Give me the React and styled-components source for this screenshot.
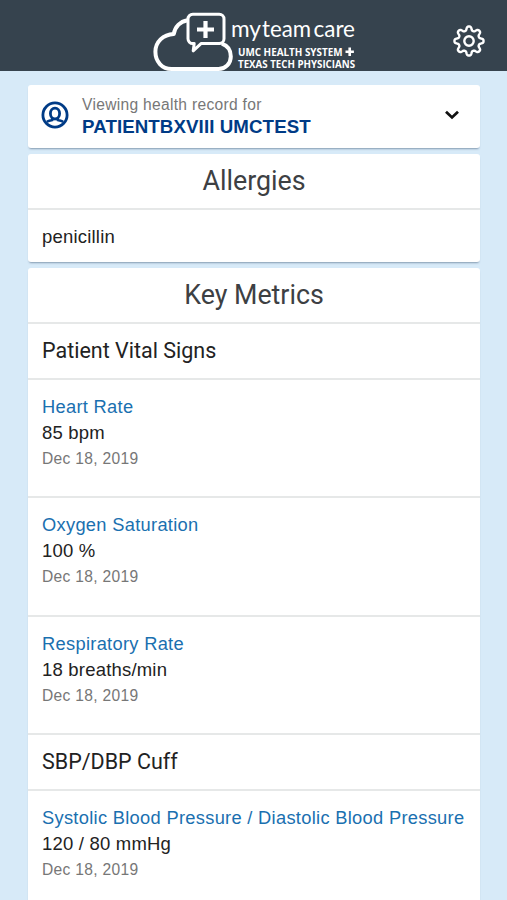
import { useState } from 'react';
import styled, { createGlobalStyle } from 'styled-components';

const vitals = [
  { name: 'Heart Rate', value: '85 bpm', date: 'Dec 18, 2019' },
  { name: 'Oxygen Saturation', value: '100 %', date: 'Dec 18, 2019' },
  { name: 'Respiratory Rate', value: '18 breaths/min', date: 'Dec 18, 2019' }
];

const cuff = [
  {
    name: 'Systolic Blood Pressure / Diastolic Blood Pressure',
    value: '120 / 80 mmHg',
    date: 'Dec 18, 2019'
  }
];

// eight rounded teeth around the origin
const gearPath = () => {
  const points = [];
  for (let i = 0; i < 160; i++) {
    const a = (i / 160) * Math.PI * 2;
    const r = 12.6 + 2.1 * Math.tanh(1.6 * Math.cos(8 * a));
    points.push(`${(r * Math.cos(a)).toFixed(2)} ${(r * Math.sin(a)).toFixed(2)}`);
  }
  return `M${points.join('L')}Z`;
};

const Logo = () => (
  <LogoSvg viewBox='150 10 207 62' role='img' aria-label='my team care'>
    <g fill='none' stroke='#fff' strokeLinejoin='round'>
      <path
        strokeWidth='4'
        d='M187.5 20.2C180 21.5 175 27 173.8 34C163 34.5 155.4 42 155.4 51.8C155.4 61.5 162 69 171.5 69H218.5C225.5 69 230.8 63.5 230.8 56.5C230.8 50.5 227.5 45.5 221.8 43.6'
      />
      <path
        strokeWidth='3'
        d='M192.8 14.2H219.2A4.8 4.8 0 0 1 224 19V38.8A4.8 4.8 0 0 1 219.2 43.6H201L193.2 50.8L194.2 43.6H192.8A4.8 4.8 0 0 1 188 38.8V19A4.8 4.8 0 0 1 192.8 14.2Z'
      />
      <path strokeWidth='4.2' d='M205.5 21V38M197 29.5H214' />
      <path strokeWidth='2.6' d='M349.7 47.6V56M345.5 51.8H353.9' />
    </g>
    <Wordmark x='231' y='37.3' textLength='30'>my</Wordmark>
    <Wordmark x='262' y='37.3' textLength='49'>team</Wordmark>
    <Wordmark x='313.5' y='37.3' textLength='41.5'>care</Wordmark>
    <Tagline x='238' y='55.8' textLength='104.5'>UMC HEALTH SYSTEM</Tagline>
    <Tagline x='238' y='68.4' textLength='117'>TEXAS TECH PHYSICIANS</Tagline>
  </LogoSvg>
);

const Metric = ({ name, value, date }) => (
  <MetricRow>
    <MetricName href='#'>{name}</MetricName>
    <MetricValue>{value}</MetricValue>
    <MetricDate>{date}</MetricDate>
  </MetricRow>
);

export default function App() {
  const [open, setOpen] = useState(false);

  return (
    <>
      <GlobalStyle />
      <Header>
        <Logo />
        <SettingsButton aria-label='Settings'>
          <svg width='34' height='34' viewBox='-17 -17 34 34'>
            <g fill='none' stroke='#fff' strokeWidth='2.4'>
              <path d={gearPath()} strokeLinejoin='round' />
              <circle r='4.7' />
            </g>
          </svg>
        </SettingsButton>
      </Header>
      <Main>
        <PatientCard aria-expanded={open} onClick={() => setOpen(!open)}>
          <svg width='28' height='28' viewBox='0 0 28 28'>
            <g fill='none' stroke='#003b86'>
              <circle cx='14' cy='14' r='12.1' strokeWidth='2.8' />
              <ellipse cx='14' cy='12.6' rx='4.6' ry='5.4' strokeWidth='2.8' />
              <path
                d='M5.8 21C7.2 19.8 9.2 19.7 11.2 19V16.8M22.2 21C20.8 19.8 18.8 19.7 16.8 19V16.8'
                strokeWidth='2.6'
              />
            </g>
          </svg>
          <PatientText>
            <PatientLabel>Viewing health record for</PatientLabel>
            <PatientName>PATIENTBXVIII UMCTEST</PatientName>
          </PatientText>
          <svg width='16' height='10' viewBox='0 0 16 10'>
            <path
              d='M2 1.8L8 7.4L14 1.8'
              fill='none'
              stroke='#111'
              strokeWidth='2.8'
            />
          </svg>
        </PatientCard>
        <Card>
          <CardTitle>Allergies</CardTitle>
          <Allergy>penicillin</Allergy>
        </Card>
        <Card>
          <CardTitle>Key Metrics</CardTitle>
          <GroupTitle>Patient Vital Signs</GroupTitle>
          {vitals.map(v => (
            <Metric key={v.name} {...v} />
          ))}
          <GroupTitle>SBP/DBP Cuff</GroupTitle>
          {cuff.map(v => (
            <Metric key={v.name} {...v} />
          ))}
        </Card>
      </Main>
    </>
  );
}

const GlobalStyle = createGlobalStyle`
  * {
    box-sizing: border-box;
  }

  body {
    margin: 0;
    height: 900px;
    overflow: hidden;
    background-color: #d7eaf8;
    font-family: 'Liberation Sans', Arial, sans-serif;
  }
`;

const Header = styled.header`
  height: 71px;
  padding: 0 21px;
  display: grid;
  grid-template-columns: 1fr auto 1fr;
  align-items: center;
  background-color: #36434e;
`;

const LogoSvg = styled.svg`
  grid-column: 2;
  width: 207px;
  height: 62px;
  align-self: end;
  margin-bottom: -1px;
`;

const Wordmark = styled.text.attrs({ lengthAdjust: 'spacingAndGlyphs' })`
  font-family: Lato, sans-serif;
  font-size: 22.5px;
  fill: #fff;
`;

const Tagline = styled.text.attrs({ lengthAdjust: 'spacingAndGlyphs' })`
  font-family: 'Open Sans', sans-serif;
  font-size: 9.8px;
  font-weight: 700;
  fill: #fff;
`;

const SettingsButton = styled.button`
  justify-self: end;
  display: flex;
  margin-top: 11px;
  padding: 0;
  border: 0;
  background: none;
`;

const Main = styled.main`
  padding: 14px 27px 0 28px;
  display: flex;
  flex-direction: column;
  gap: 6px;
`;

const Card = styled.section`
  background-color: #fff;
  border-radius: 3px;
  box-shadow: 0 2px 2px -1px rgba(50, 75, 105, 0.5);
`;

const PatientCard = styled(Card).attrs({ as: 'button' })`
  height: 63px;
  padding: 0 20px 3px 13px;
  display: flex;
  align-items: center;
  border: 0;
  font-family: inherit;
  text-align: left;
`;

const PatientText = styled.span`
  flex: 1;
  margin-left: 13px;
  padding-top: 2px;
  display: flex;
  flex-direction: column;
`;

const PatientLabel = styled.span`
  color: #777;
  font-size: 15.6px;
  letter-spacing: 0.3px;
  line-height: 22px;
`;

const PatientName = styled.span`
  color: #003b86;
  font-size: 18.7px;
  font-weight: 700;
  letter-spacing: 0.1px;
  line-height: 22px;
`;

const CardTitle = styled.h2`
  height: 54px;
  margin: 0;
  color: #3d4043;
  font-family: Roboto, sans-serif;
  font-size: 26.8px;
  font-weight: 400;
  line-height: 55px;
  text-align: center;
`;

const Allergy = styled.div`
  height: 54px;
  padding: 0 14px;
  border-top: 2px solid #e6e8e8;
  color: #222;
  font-size: 18.5px;
  letter-spacing: 0.2px;
  line-height: 53px;
`;

const GroupTitle = styled.h3`
  height: 55.5px;
  margin: 0;
  padding: 0 14px;
  border-top: 2px solid #e6e8e8;
  color: #222;
  font-family: Roboto, sans-serif;
  font-size: 21.5px;
  font-weight: 400;
  line-height: 53px;
`;

const MetricRow = styled.div`
  height: 118.6px;
  padding: 14px 14px 0;
  display: flex;
  flex-direction: column;
  align-items: flex-start;
  border-top: 2px solid #e6e8e8;
  white-space: nowrap;
`;

const MetricName = styled.a`
  color: #1a70b0;
  font-size: 18.3px;
  letter-spacing: 0.3px;
  line-height: 26px;
  text-decoration: none;
`;

const MetricValue = styled.span`
  color: #222;
  font-size: 18.5px;
  letter-spacing: 0.2px;
  line-height: 26px;
`;

const MetricDate = styled.span`
  color: #777;
  font-size: 15.6px;
  letter-spacing: 0.3px;
  line-height: 26px;
`;
